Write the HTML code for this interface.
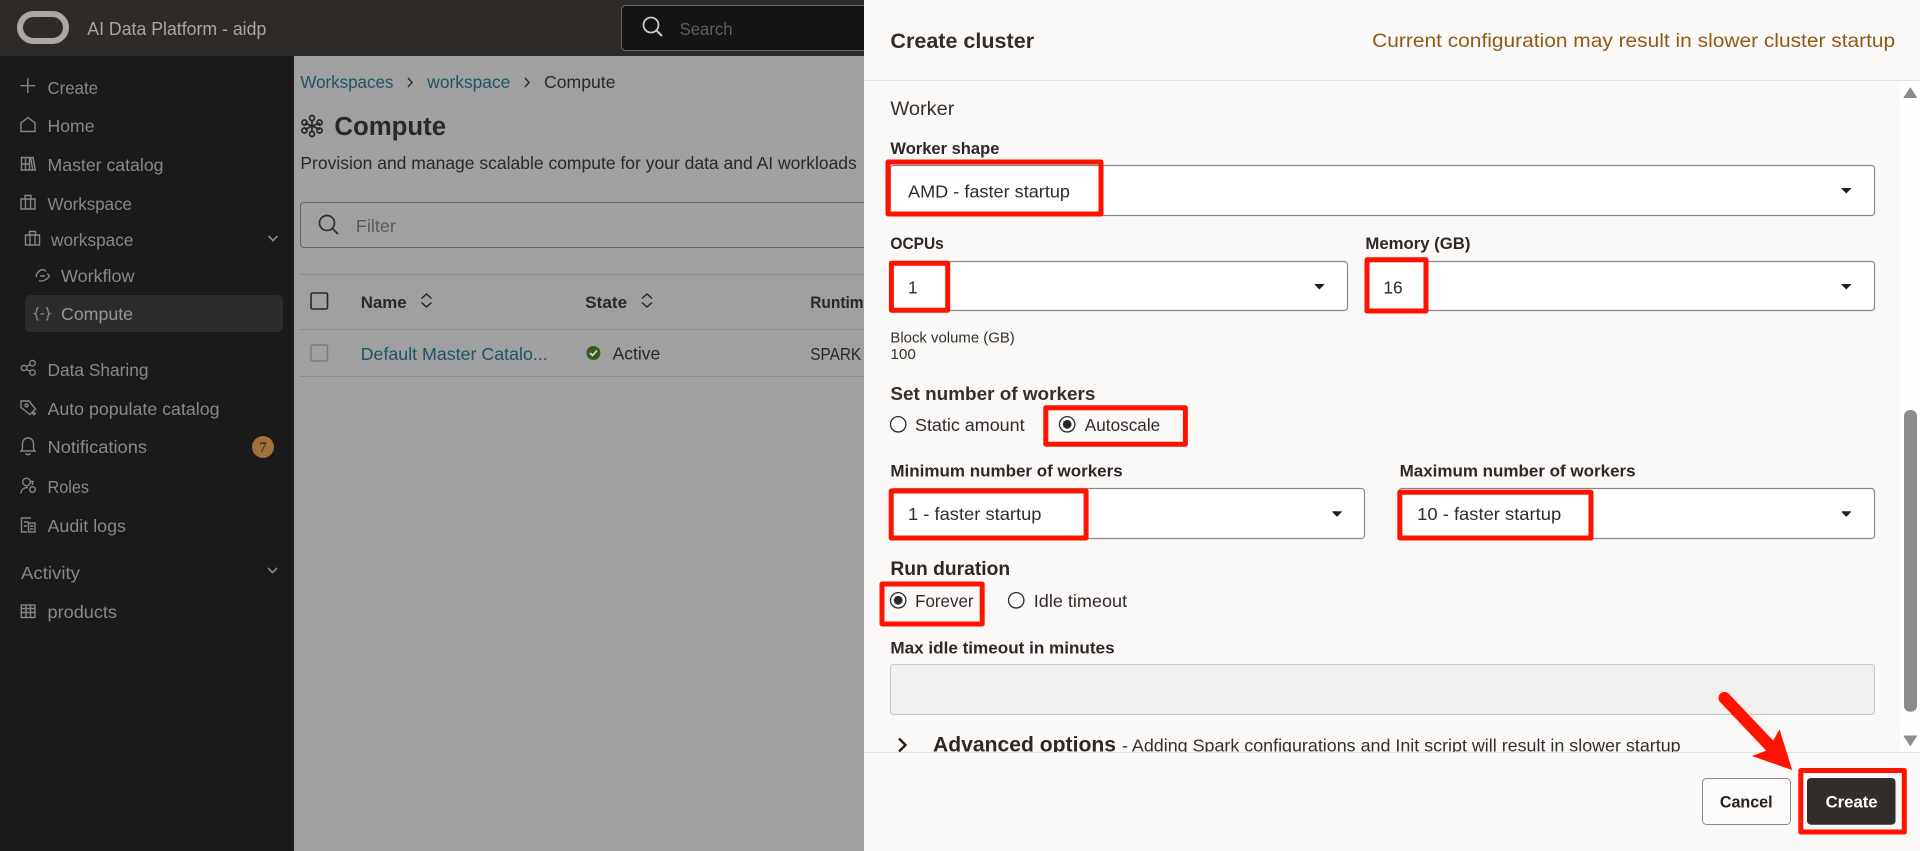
<!DOCTYPE html>
<html lang="en"><head><meta charset="utf-8"><title>Create cluster</title>
<style>
html,body{margin:0;padding:0;background:#a0a0a0;width:1920px;height:851px;overflow:hidden}
svg{display:block}
text{font-family:"Liberation Sans",sans-serif;font-size:17.5px;white-space:pre}
.nav{fill:#888}
.b{font-weight:700}
.dk{fill:#2b2826}
.lab{font-weight:700;font-size:16.5px;fill:#2b2826}
.val{fill:#2f2c2a;font-size:17.5px}
.teal{fill:#1d5466}
.ic{fill:none;stroke:#858585;stroke-width:1.4}
.red{fill:none;stroke:#fe1300;stroke-width:5;stroke-linejoin:round}
.sel{fill:#fff;stroke:#8b8987;stroke-width:1.2}
.car{fill:#231f1c;stroke:#231f1c;stroke-width:1;stroke-linejoin:round}
.rad{fill:#fff;stroke:#2f2c2a;stroke-width:1.3}
</style></head><body>
<svg width="1920" height="851" viewBox="0 0 1920 851" xmlns="http://www.w3.org/2000/svg">
<defs><clipPath id="body"><rect x="864" y="81" width="1036" height="671.5"/></clipPath></defs>
<rect width="1920" height="851" fill="#a0a0a0"/>
<rect width="1920" height="56" fill="#2e2a27"/>
<rect y="56" width="294" height="795" fill="#1a1a1a"/>

<!-- top bar -->
<rect x="20" y="14" width="46" height="27" rx="13.5" fill="none" stroke="#a8a8a8" stroke-width="6"/>
<text x="87.3" y="35" textLength="179" lengthAdjust="spacingAndGlyphs" style="font-size:18px" fill="#a6a6a6">AI Data Platform - aidp</text>
<rect x="621.5" y="5.5" width="300" height="45" rx="4" fill="#141414" stroke="#6b6b6b"/>
<circle cx="651" cy="25" r="7.5" fill="none" stroke="#c9c9c9" stroke-width="1.8"/><path d="M656.5 30.5L662 36" stroke="#c9c9c9" stroke-width="2" fill="none"/>
<text x="679.6" y="35" textLength="53" lengthAdjust="spacingAndGlyphs" fill="#5f5f5f">Search</text>

<!-- sidebar -->
<rect x="25" y="295" width="258" height="37" rx="5" fill="#2b2b2b"/>
<g class="nav">
<text x="47.5" y="94" textLength="50.5" lengthAdjust="spacingAndGlyphs">Create</text>
<text x="47.5" y="132" textLength="47" lengthAdjust="spacingAndGlyphs">Home</text>
<text x="47.5" y="171" textLength="116" lengthAdjust="spacingAndGlyphs">Master catalog</text>
<text x="47.5" y="210" textLength="84.5" lengthAdjust="spacingAndGlyphs">Workspace</text>
<text x="51" y="246" textLength="82.5" lengthAdjust="spacingAndGlyphs">workspace</text>
<text x="61" y="282" textLength="73.5" lengthAdjust="spacingAndGlyphs">Workflow</text>
<text x="61" y="320" textLength="72" lengthAdjust="spacingAndGlyphs" style="fill:#959595">Compute</text>
<text x="47.5" y="376" textLength="101" lengthAdjust="spacingAndGlyphs">Data Sharing</text>
<text x="47.5" y="415" textLength="172" lengthAdjust="spacingAndGlyphs">Auto populate catalog</text>
<text x="47.5" y="453" textLength="99.5" lengthAdjust="spacingAndGlyphs">Notifications</text>
<text x="47.5" y="493" textLength="41.5" lengthAdjust="spacingAndGlyphs">Roles</text>
<text x="47.5" y="532" textLength="78.5" lengthAdjust="spacingAndGlyphs">Audit logs</text>
<text x="21" y="579" textLength="59" lengthAdjust="spacingAndGlyphs">Activity</text>
<text x="47.5" y="618" textLength="69.5" lengthAdjust="spacingAndGlyphs">products</text>
</g>
<g class="ic">
<path d="M20.5 85.7H35.2M27.8 78.3V93"/>
<path d="M21 131.5V123L28 117.5L35 123V131.5Z"/>
<path d="M21.5 157.5H29.5V170H21.5ZM21.5 164H29.5M25.5 157.5V170M30.5 157.5H33L35.3 170H32.8ZM20.5 170H35.5"/>
<path d="M21 199H35V209H21ZM25 199V195.5H31V199M25.5 199V209M30.5 199V209"/>
<path d="M25.5 235H39.5V245H25.5ZM29.5 235V231.5H35.5V235M30 235V245M35 235V245"/>
<path d="M46 271.5C44 268.5 40 269.5 38 272.5C36 274 35.5 276 37 277M39 280.5C42 282 46 280 48.5 277.5C50 276 49 274.5 47 274M40 276H45"/>
<path d="M38.5 307.5C35.5 307.5 37.5 313 35 313.7C37.5 314.5 35.5 320 38.5 320M46 307.5C49 307.5 47 313 49.5 313.7C47 314.5 49 320 46 320M40.5 313.8H44" />
<circle cx="24" cy="368" r="2.7"/><circle cx="32.5" cy="363.2" r="2.7"/><circle cx="32.5" cy="372.5" r="2.7"/><path d="M26.4 366.7L30.2 364.5M26.4 369.3L30.2 371.2"/>
<path d="M21 401H29L35.5 409L30 414.5L21 407.5Z"/><circle cx="26.5" cy="405.5" r="1.5"/><path d="M32 413.5H36M34 411.5V415.5"/>
<path d="M22.5 449V444.5C22.5 440.5 24.5 438 28 438C31.5 438 33.5 440.5 33.5 444.5V449L35 451H21ZM25.5 453.5C26.5 455 29.5 455 30.5 453.5"/>
<circle cx="26.5" cy="482" r="3.8"/><path d="M21 493.5C21 489.5 24 487.5 28 487.5M31 481.5H34M32.5 481.5V485"/><circle cx="32.5" cy="489.5" r="2.8"/>
<path d="M31 518H21.5V532H27M24 522H28.5M24 526H27"/><rect x="28.5" y="523" width="6.5" height="9"/><path d="M30 526H33.5M30 529H33.5"/>
<rect x="21.3" y="605" width="13.6" height="12.5"/><path d="M21.3 608.5H35M21.3 612.5H35M26 605V617.5M30.5 605V617.5"/>
<path d="M268.5 236L273 240.5L277.5 236M268 568L272.5 572.5L277 568" stroke-width="1.7"/>
</g>
<circle cx="263" cy="447" r="11" fill="#a0703c"/>
<text x="263" y="452" text-anchor="middle" style="font-family:'Liberation Serif',serif;font-size:14.5px" fill="#1d1a15">7</text>

<!-- main page -->
<text x="300.4" y="88" textLength="93" lengthAdjust="spacingAndGlyphs" class="teal">Workspaces</text>
<path d="M408 78L412 82.5L408 87M525 78L529 82.5L525 87" fill="none" stroke="#2b2826" stroke-width="1.4"/>
<text x="427.3" y="88" textLength="83" lengthAdjust="spacingAndGlyphs" class="teal">workspace</text>
<text x="544" y="88" textLength="71.5" lengthAdjust="spacingAndGlyphs" class="dk">Compute</text>
<g fill="none" stroke="#282522" stroke-width="1.7">
<path d="M312 126L312 120.5M312 126L305 123M312 126L320 123M312 126L305 129.5M312 126L320 129.5M312 126L312 131"/>
<circle cx="312" cy="118" r="2.5"/><circle cx="304.5" cy="122.5" r="2.5"/><circle cx="319.5" cy="122.5" r="2.5"/><circle cx="304.5" cy="130.5" r="2.5"/><circle cx="319.5" cy="130.5" r="2.5"/><circle cx="312" cy="134" r="2.5"/>
</g>
<text x="334.4" y="135" textLength="111.7" lengthAdjust="spacingAndGlyphs" class="b dk" style="font-size:25.5px">Compute</text>
<text x="300.4" y="169" textLength="556.4" lengthAdjust="spacingAndGlyphs" class="dk">Provision and manage scalable compute for your data and AI workloads</text>
<rect x="300.5" y="202.5" width="600" height="45" rx="3.5" fill="none" stroke="#666"/>
<circle cx="327" cy="223" r="7.5" fill="none" stroke="#2e2e2e" stroke-width="1.7"/><path d="M332.5 228.5L338 234" stroke="#2e2e2e" stroke-width="1.9"/>
<text x="355.9" y="232" textLength="40" lengthAdjust="spacingAndGlyphs" fill="#5a5a5a">Filter</text>
<path d="M300 274.5H864M300 329.5H864M300 376.5H864" stroke="#8d8d8d" stroke-width="1"/>
<rect x="311" y="293" width="16.5" height="16" rx="1.5" fill="none" stroke="#262626" stroke-width="1.6"/>
<rect x="311" y="345" width="16.5" height="16" rx="1.5" fill="none" stroke="#7b7b7b" stroke-width="1.4"/>
<text x="360.7" y="308" textLength="46" lengthAdjust="spacingAndGlyphs" class="lab" style="font-size:17px">Name</text>
<text x="585.2" y="308" textLength="42" lengthAdjust="spacingAndGlyphs" class="lab" style="font-size:17px">State</text>
<text x="810.2" y="308" textLength="62" lengthAdjust="spacingAndGlyphs" class="lab" style="font-size:17px">Runtime</text>
<path d="M421.5 298.5L426.5 294L431.5 298.5M421.5 302.5L426.5 307L431.5 302.5M642 298.5L647 294L652 298.5M642 302.5L647 307L652 302.5" fill="none" stroke="#262626" stroke-width="1.4"/>
<text x="360.7" y="360" textLength="187" lengthAdjust="spacingAndGlyphs" class="teal">Default Master Catalo...</text>
<circle cx="593.4" cy="353" r="7" fill="#3c5a1f"/><path d="M590 353L592.5 355.5L597 350.5" fill="none" stroke="#dfe5d6" stroke-width="1.6"/>
<text x="612.6" y="359.5" textLength="47.7" lengthAdjust="spacingAndGlyphs" class="dk">Active</text>
<text x="810.2" y="360" textLength="51" lengthAdjust="spacingAndGlyphs" class="dk">SPARK</text>

<!-- panel -->
<rect x="864" width="1056" height="851" fill="#fbf9f8"/>
<rect x="1900" y="81" width="20" height="671" fill="#fefefe"/>
<text x="890.4" y="48" textLength="143.7" lengthAdjust="spacingAndGlyphs" class="b" style="font-size:21px" fill="#312d2a">Create cluster</text>
<text x="1372.2" y="47" textLength="523" lengthAdjust="spacingAndGlyphs" style="font-size:19.5px" fill="#8f5a17">Current configuration may result in slower cluster startup</text>
<path d="M864 80.5H1920" stroke="#e4e2e0"/>
<text x="890.4" y="115" textLength="64" lengthAdjust="spacingAndGlyphs" style="font-size:19px" fill="#33302d">Worker</text>
<text x="890.4" y="154" textLength="109" lengthAdjust="spacingAndGlyphs" class="lab">Worker shape</text>
<rect class="sel" x="890.5" y="165.5" width="984" height="50" rx="3"/>
<text x="890.4" y="249" textLength="53.4" lengthAdjust="spacingAndGlyphs" class="lab">OCPUs</text>
<rect class="sel" x="890.5" y="261.5" width="457" height="49" rx="3"/>
<text x="1365.4" y="249" textLength="105" lengthAdjust="spacingAndGlyphs" class="lab">Memory (GB)</text>
<rect class="sel" x="1366" y="261.5" width="508.5" height="49" rx="3"/>
<text x="890.4" y="342.3" textLength="124.4" lengthAdjust="spacingAndGlyphs" style="font-size:15px" fill="#33302d">Block volume (GB)</text>
<text x="890.4" y="359" textLength="25.4" lengthAdjust="spacingAndGlyphs" style="font-size:15px" fill="#33302d">100</text>
<text x="890.4" y="400" textLength="205" lengthAdjust="spacingAndGlyphs" class="b" style="font-size:18.5px" fill="#33302d">Set number of workers</text>
<circle class="rad" cx="898.2" cy="424.3" r="7.7"/>
<text x="915" y="431" textLength="109.6" lengthAdjust="spacingAndGlyphs" class="val">Static amount</text>
<circle class="rad" cx="1067.2" cy="424.3" r="7.7"/><circle cx="1067.2" cy="424.3" r="4.4" fill="#2b2826"/>
<text x="1084.8" y="431" textLength="75.4" lengthAdjust="spacingAndGlyphs" class="val">Autoscale</text>
<text x="890.4" y="476.7" textLength="232.3" lengthAdjust="spacingAndGlyphs" class="lab">Minimum number of workers</text>
<rect class="sel" x="890.5" y="488.5" width="474" height="50" rx="3"/>
<text x="1399.6" y="476.7" textLength="236" lengthAdjust="spacingAndGlyphs" class="lab">Maximum number of workers</text>
<rect class="sel" x="1399" y="488.5" width="475.5" height="50" rx="3"/>
<text x="890.4" y="575" textLength="119.7" lengthAdjust="spacingAndGlyphs" class="b" style="font-size:19px" fill="#2b2826">Run duration</text>
<circle class="rad" cx="898.2" cy="600.3" r="7.7"/><circle cx="898.2" cy="600.3" r="4.4" fill="#2b2826"/>
<text x="915.1" y="607" textLength="58.5" lengthAdjust="spacingAndGlyphs" class="val">Forever</text>
<circle class="rad" cx="1016.2" cy="600.3" r="7.7"/>
<text x="1033.8" y="607" textLength="93.3" lengthAdjust="spacingAndGlyphs" class="val">Idle timeout</text>
<text x="890.4" y="653.3" textLength="224.2" lengthAdjust="spacingAndGlyphs" class="lab">Max idle timeout in minutes</text>
<rect x="890.5" y="664.5" width="984" height="50" rx="3" fill="#f1f0ee" stroke="#c9c8c6"/>
<g clip-path="url(#body)">
<path d="M899 738.5L905.5 745L899 751.5" fill="none" stroke="#231f1c" stroke-width="2.4"/>
<text x="933" y="751.7" textLength="183" lengthAdjust="spacingAndGlyphs" class="b" style="font-size:21px" fill="#2b2826">Advanced options</text>
<text x="1122" y="751.7" textLength="558.6" lengthAdjust="spacingAndGlyphs" fill="#33302d">- Adding Spark configurations and Init script will result in slower startup</text>
</g>
<path d="M864 752.5H1920" stroke="#e4e2e0"/>

<!-- values and carets -->
<text x="908" y="197.3" textLength="162" lengthAdjust="spacingAndGlyphs" class="val">AMD - faster startup</text>
<text x="908" y="293.3" textLength="9.5" lengthAdjust="spacingAndGlyphs" class="val">1</text>
<text x="1383.4" y="293.3" textLength="19.3" lengthAdjust="spacingAndGlyphs" class="val">16</text>
<text x="908" y="520" textLength="133.5" lengthAdjust="spacingAndGlyphs" class="val">1 - faster startup</text>
<text x="1417.2" y="520" textLength="144" lengthAdjust="spacingAndGlyphs" class="val">10 - faster startup</text>
<path class="car" d="M1842 188.5H1850.5L1846.3 192.8Z"/>
<path class="car" d="M1315.2 284.5H1323.7L1319.4 288.8Z"/>
<path class="car" d="M1842 284.5H1850.5L1846.3 288.8Z"/>
<path class="car" d="M1332.8 511.8H1341.3L1337 516.1Z"/>
<path class="car" d="M1842 511.8H1850.5L1846.3 516.1Z"/>

<!-- scrollbar -->
<path d="M1910.3 88L1916.5 97.5H1904Z" fill="#8c8c8c" stroke="#8c8c8c" stroke-linejoin="round"/>
<rect x="1904" y="410" width="13" height="301.7" rx="6" fill="#8c8c8c"/>
<path d="M1904 736H1916.5L1910.3 745.5Z" fill="#8c8c8c" stroke="#8c8c8c" stroke-linejoin="round"/>

<!-- buttons -->
<rect x="1702.5" y="778.5" width="88" height="46" rx="4" fill="#fcfbfa" stroke="#8c8a88"/>
<text x="1719.9" y="807.7" textLength="52.7" lengthAdjust="spacingAndGlyphs" class="b" style="font-size:17px" fill="#231f1c">Cancel</text>
<rect x="1807" y="778" width="88.5" height="46.7" rx="4" fill="#312d2a"/>
<text x="1825.6" y="807.7" textLength="52" lengthAdjust="spacingAndGlyphs" class="b" style="font-size:17px" fill="#fff">Create</text>

<!-- annotations -->
<rect class="red" x="888" y="162" width="213" height="52"/>
<rect class="red" x="891.4" y="263.2" width="56.3" height="47"/>
<rect class="red" x="1367" y="259.8" width="59" height="51.2"/>
<rect class="red" x="1045.8" y="407.8" width="139.6" height="36.4"/>
<rect class="red" x="891.2" y="491" width="194.9" height="47"/>
<rect class="red" x="1399.8" y="492.3" width="191.2" height="45.7"/>
<rect class="red" x="882" y="584" width="100.2" height="40"/>
<rect class="red" x="1800.8" y="770.5" width="103.5" height="61.5"/>
<path d="M1724.5 698L1772 748" stroke="#fe1300" stroke-width="12" stroke-linecap="round" fill="none"/>
<path d="M1779.5 729.3L1792.2 770L1751.9 756L1768 750Z" fill="#fe1300"/>
</svg>
</body></html>
